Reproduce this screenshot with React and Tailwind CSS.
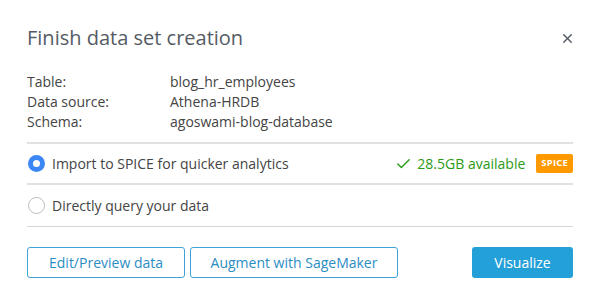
import { X, Check } from 'lucide-react';

export default function App() {
    return (
        <div className="w-[600px] h-[299px] bg-white px-[27px] pt-[24px] text-[#444]" style={{ fontFamily: '"Open Sans", "Noto Sans", sans-serif' }}>
            <div className="flex items-center justify-between h-[28px]">
                <h1 className="text-[20px] text-[#545b64] leading-none">Finish data set creation</h1>
                <button className="text-[#545b64] -mr-[2px]">
                    <X className="w-[15px] h-[15px]" strokeWidth={2.2} />
                </button>
            </div>

            <div className="mt-[20px] grid grid-cols-[143px_1fr] text-[14px] leading-[20px] text-[#444]">
                <span>Table:</span>
                <span>blog_hr_employees</span>
                <span>Data source:</span>
                <span>Athena-HRDB</span>
                <span>Schema:</span>
                <span>agoswami-blog-database</span>
            </div>

            <div className="mt-[10px] border-t-2 border-[#e1e1e1]">
                <div className="flex items-center h-[41px] border-b-2 border-[#e1e1e1]">
                    <span className="w-[17px] h-[17px] rounded-full bg-[#3d87f5] flex items-center justify-center ml-[1px]">
                        <span className="w-[7px] h-[7px] rounded-full bg-white" />
                    </span>
                    <span className="ml-[7px] text-[14px] text-[#444]">Import to SPICE for quicker analytics</span>
                    <span className="ml-auto flex items-center text-[#2a9a17] text-[14px]">
                        <Check className="w-[17px] h-[18px] mr-[5px]" strokeWidth={2} />
                        28.5GB available
                    </span>
                    <span className="ml-[11px] h-[19px] px-[5px] rounded-[2px] bg-[#ff9900] text-white text-[9.5px] font-bold flex items-center tracking-[0.2px]">SPICE</span>
                </div>
                <div className="flex items-center h-[42px] border-b border-[#d5d5d5]">
                    <span className="w-[17px] h-[17px] rounded-full border border-[#bdbdbd] bg-white ml-[1px]" />
                    <span className="ml-[7px] text-[14px] text-[#444]">Directly query your data</span>
                </div>
            </div>

            <div className="mt-[20px] flex items-center">
                <button className="w-[158px] h-[31px] border border-[#3ea4d8] rounded-[3px] text-[#2b8dc4] text-[14px] font-medium">Edit/Preview data</button>
                <button className="ml-[5px] w-[208px] h-[31px] border border-[#3ea4d8] rounded-[3px] text-[#2b8dc4] text-[14px] font-medium">Augment with SageMaker</button>
                <button className="ml-auto w-[101px] h-[31px] rounded-[3px] bg-[#23a0d8] text-white text-[14px] font-medium">Visualize</button>
            </div>
        </div>
    );
}
